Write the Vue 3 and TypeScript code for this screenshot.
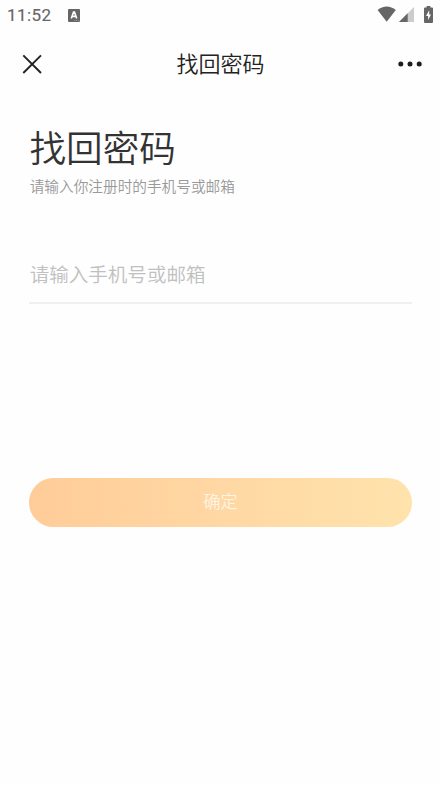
<script setup lang="ts">
import { ref } from 'vue'

const account = ref<string>('')
const dots: number[] = [1, 2, 3]
</script>

<template>
  <div class="screen">
    <div class="status">
      <span class="time">11:52</span>
      <svg class="app-badge" width="12" height="13" viewBox="0 0 12 13">
        <rect width="12" height="13" rx="1" fill="#666" />
        <path d="M3.3 9.4 5.5 3h1L8.7 9.4M4.3 7.4h3.4" fill="none" stroke="#fff" stroke-width="1.6" />
        <path d="M6.2 11.5h1M8 11.5h1M9.8 11.5h1" stroke="#aaa" stroke-width=".8" />
      </svg>
      <div class="signals">
        <svg class="wifi" width="20" height="16" viewBox="0 0 20 16">
          <path d="M.6 4.1C6-.7 13.4-.7 18.8 4.1L9.7 15.7Z" fill="#666" />
        </svg>
        <svg class="cell" width="15" height="15" viewBox="0 0 15 15">
          <path d="M15 0V15H0Z" fill="#ccc" />
          <path d="M8.7 6.3V15H0Z" fill="#666" />
        </svg>
        <svg class="battery" width="9" height="17" viewBox="0 0 9 17">
          <path d="M2.6 0h3.8v1.6H8a1 1 0 0 1 1 1V16a1 1 0 0 1-1 1H1a1 1 0 0 1-1-1V2.6a1 1 0 0 1 1-1h1.6Z" fill="#666" />
          <path d="M5.2 4.2 2 10h2.1v4L7 8.4H5.2Z" fill="#fff" />
        </svg>
      </div>
    </div>

    <header class="nav">
      <button class="icon-button" type="button" aria-label="关闭">
        <svg width="20" height="20" viewBox="0 0 20 20">
          <path d="M1.3 1.3 19 19M19 1.3 1.3 19" stroke="#222" stroke-width="1.9" />
        </svg>
      </button>
      <div class="nav-title">找回密码</div>
      <button class="icon-button more" type="button" aria-label="更多">
        <svg width="24" height="6" viewBox="0 0 24 6">
          <circle v-for="dot in dots" :key="dot" :cx="dot * 9.2 - 6.4" cy="3" r="2.5" fill="#1c1c1c" />
        </svg>
      </button>
    </header>

    <main class="content">
      <h1>找回密码</h1>
      <p class="hint">请输入你注册时的手机号或邮箱</p>
      <input v-model="account" class="account" type="text" placeholder="请输入手机号或邮箱" />
      <button class="submit" type="button">确定</button>
    </main>
  </div>
</template>

<style>
body {
  background: #fefefe;
}
</style>

<style scoped>
.screen {
  height: 785px;
  overflow: hidden;
  background: #fefefe;
  font-family: "Noto Sans CJK SC", sans-serif;
  font-weight: 350;
}

.status {
  display: flex;
  height: 30px;
  padding: 0 8px 0 7px;
}

.time {
  width: 61px;
  color: #666;
  font: 400 17px/31px Roboto, sans-serif;
  letter-spacing: 0.4px;
  -webkit-text-stroke: 0.15px #666;
}

.app-badge {
  margin-top: 9px;
}

.signals {
  display: flex;
  margin-left: auto;
}

.wifi {
  margin-top: 6px;
}

.cell {
  margin: 7px 10px 0 2px;
}

.battery {
  margin-top: 6px;
}

.nav {
  display: grid;
  grid-template-columns: 60px 1fr 60px;
  align-items: center;
  height: 68px;
  padding: 0 19px 0 22px;
}

.icon-button {
  display: flex;
  align-items: center;
  padding: 0;
  border: 0;
  background: none;
}

.more {
  justify-content: flex-end;
}

.nav-title {
  padding: 0 3px 4px 0;
  color: #222;
  font-size: 22px;
  line-height: 32px;
  text-align: center;
}

.content {
  display: flex;
  flex-direction: column;
  padding: 22px 29px 0;
}

h1 {
  margin: 0;
  padding-left: 0.5px;
  color: #333;
  font-size: 36.6px;
  font-weight: inherit;
  line-height: 54px;
}

.hint {
  margin: 1px 0 0;
  padding-left: 0.7px;
  color: #999;
  font-size: 14.67px;
  line-height: 22px;
}

.account {
  height: 55px;
  margin-top: 49px;
  padding: 0 0 1px 0.7px;
  border: 0;
  border-bottom: 2px solid #f0f0f0;
  outline: 0;
  background: none;
  color: #333;
  font-family: inherit;
  font-size: 19.55px;
  font-weight: inherit;
}

.account::placeholder {
  color: #c0c0c0;
  opacity: 1;
}

.submit {
  height: 49px;
  margin-top: 174.4px;
  padding: 0 0 4px;
  border: 0;
  border-radius: 25px;
  background: linear-gradient(90deg, #ffcc99, #ffe3ac);
  color: #fff4e4;
  font-family: inherit;
  font-size: 17.1px;
  font-weight: inherit;
}
</style>
